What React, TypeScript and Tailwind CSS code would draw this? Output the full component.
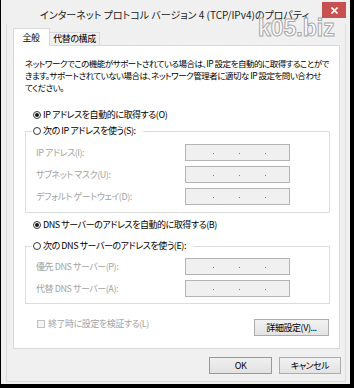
import React from "react";

const F = "font-['Noto_Sans_CJK_JP',sans-serif] [font-feature-settings:'palt']";

function Radio({ on }: { on?: boolean }) {
  return (
    <span className="w-[8px] h-[8px] rounded-full border border-[#3a3a3a] bg-white flex items-center justify-center shrink-0">
      {on && <span className="w-[4px] h-[4px] rounded-full bg-[#1a1a1a]" />}
    </span>
  );
}

function IpBox() {
  return (
    <div className="w-[105px] h-[17px] border border-[#b4b4b4] bg-[#f0f0f0] flex items-center pt-[2px]">
      <span className="ml-[27px] w-[1px] h-[1px] bg-[#7a7a7a]" />
      <span className="ml-[25px] w-[1px] h-[1px] bg-[#7a7a7a]" />
      <span className="ml-[25px] w-[1px] h-[1px] bg-[#7a7a7a]" />
    </div>
  );
}

function Field({ label }: { label: string }) {
  return (
    <div className="flex items-center h-[17px]">
      <span className="w-[159px] pl-[10px] text-[#a3a3a3] whitespace-nowrap leading-[12px]">{label}</span>
      <IpBox />
    </div>
  );
}

export default function App() {
  return (
    <div className={`w-[354px] h-[388px] bg-black relative overflow-hidden text-[9px] text-black tracking-[-0.45px] ${F}`}>
      <div className="ml-[1px] w-[349px] h-[384px] bg-[#f0f0f0] flex flex-col relative">
        {/* title bar */}
        <div className="h-[24px] flex justify-center pt-[8px] pr-[2px]">
          <span className="text-[10px] leading-[14px] text-[#1b1b1b] tracking-[0px] whitespace-nowrap">
            インターネット プロトコル バージョン 4 (TCP/IPv4)のプロパティ
          </span>
        </div>
        <div className="absolute right-[4px] top-[2px] w-[24px] h-[16px] bg-[#c75050] flex items-center justify-center">
          <svg width="7" height="7" viewBox="0 0 7 7">
            <path d="M0.5 0.5 L6.5 6.5 M6.5 0.5 L0.5 6.5" stroke="white" strokeWidth="1.6" />
          </svg>
        </div>

        {/* client */}
        <div className="ml-[5px] w-[340px] h-[358px] border-l border-r border-b border-[#dcdcdc] bg-[#f0f0f0] flex flex-col pt-[4px]">
          {/* tabs */}
          <div className="flex items-end ml-[6px] h-[18px] -mb-[1px] relative z-10">
            <div className="w-[37px] h-[18px] bg-white border border-b-0 border-[#d9d9d9] flex items-center justify-center pr-[1px]">
              <span className="leading-[12px]">全般</span>
            </div>
            <div className="w-[50px] h-[13px] mb-[1px] bg-[#f0f0f0] border-t border-r border-[#d9d9d9] flex items-center justify-center">
              <span className="leading-[12px]">代替の構成</span>
            </div>
          </div>

          {/* panel */}
          <div className="ml-[6px] w-[327px] h-[304px] border border-[#d9d9d9] bg-white flex flex-col">
            <p className="mt-[11px] ml-[11px] leading-[12px] whitespace-nowrap text-[8.5px] tracking-[-0.5px]">
              ネットワークでこの機能がサポートされている場合は、IP 設定を自動的に取得することがで
              <br />
              きます。サポートされていない場合は、ネットワーク管理者に適切な IP 設定を問い合わせ
              <br />
              てください。
            </p>

            <div className="mt-[16px] ml-[19px] h-[12px] flex items-center gap-[2px] leading-[12px] whitespace-nowrap">
              <Radio on />
              <span>IP アドレスを自動的に取得する(O)</span>
            </div>

            <fieldset className="mt-[4px] ml-[11px] w-[305px] border border-[#dcdcdc]">
              <legend className="ml-[6px] pl-[1px] pr-[7px]">
                <div className="h-[12px] flex items-center gap-[2px] leading-[12px] whitespace-nowrap">
                  <Radio />
                  <span>次の IP アドレスを使う(S):</span>
                </div>
              </legend>
              <div className="pt-[7px] pb-[7px] flex flex-col gap-[5px]">
                <Field label="IP アドレス(I):" />
                <Field label="サブネット マスク(U):" />
                <Field label="デフォルト ゲートウェイ(D):" />
              </div>
            </fieldset>

            <div className="mt-[6px] ml-[19px] h-[12px] flex items-center gap-[2px] leading-[12px] whitespace-nowrap">
              <Radio on />
              <span>DNS サーバーのアドレスを自動的に取得する(B)</span>
            </div>

            <fieldset className="mt-[9px] ml-[11px] w-[305px] border border-[#dcdcdc]">
              <legend className="ml-[6px] pl-[1px] pr-[7px]">
                <div className="h-[12px] flex items-center gap-[2px] leading-[12px] whitespace-nowrap">
                  <Radio />
                  <span>次の DNS サーバーのアドレスを使う(E):</span>
                </div>
              </legend>
              <div className="pt-[6px] pb-[6px] flex flex-col gap-[5px]">
                <Field label="優先 DNS サーバー(P):" />
                <Field label="代替 DNS サーバー(A):" />
              </div>
            </fieldset>

            <div className="mt-[15px] flex items-start justify-between pl-[23px] pr-[10px]">
              <div className="h-[9px] flex items-center gap-[3px] leading-[12px] whitespace-nowrap text-[#a3a3a3]">
                <span className="w-[8px] h-[8px] border border-[#c2c2c2] bg-[#f4f4f4] shrink-0" />
                <span>終了時に設定を検証する(L)</span>
              </div>
              <div className="w-[75px] h-[17px] border border-[#acacac] bg-gradient-to-b from-[#f2f2f2] to-[#e3e3e3] flex items-center justify-center leading-[12px] whitespace-nowrap">
                詳細設定(V)...
              </div>
            </div>
          </div>

          {/* buttons */}
          <div className="mt-[8px] flex justify-end gap-[7px] pr-[4px]">
            <div className="w-[63px] h-[17px] border border-[#5fa7ea] bg-gradient-to-b from-[#efefef] to-[#e2e2e2] flex items-center justify-center leading-[12px]">
              OK
            </div>
            <div className="w-[62px] h-[17px] border border-[#acacac] bg-gradient-to-b from-[#f2f2f2] to-[#e3e3e3] flex items-center justify-center leading-[12px]">
              キャンセル
            </div>
          </div>
        </div>

        {/* watermark */}
        <div className="absolute left-[257px] top-[17px] text-[23px] leading-[23px] font-bold font-['Liberation_Sans',sans-serif] tracking-[0px] text-[#fbfbfb] [-webkit-text-stroke:1px_#a8a8a8] [font-feature-settings:normal]">
          k05.biz
        </div>
      </div>
    </div>
  );
}
